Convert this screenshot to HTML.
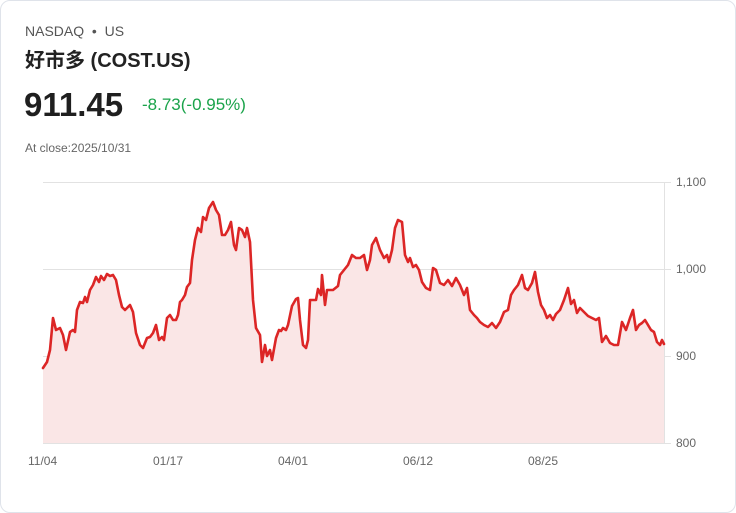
<!DOCTYPE html>
<html><head><meta charset="utf-8"><style>
body{margin:0;background:#fff;width:736px;height:513px;overflow:hidden;font-family:"Liberation Sans","Noto Sans CJK SC",sans-serif}
.card{position:absolute;left:0;top:0;width:734px;height:511px;border:1px solid #dfe3ea;border-radius:10px}
.t{position:absolute;white-space:nowrap}
</style></head><body>
<div class="card"></div>
<div class="t" style="left:25px;top:23px;font-size:14px;color:#555">NASDAQ&nbsp; • &nbsp;US</div>
<div class="t" style="left:25px;top:44px;font-size:20px;font-weight:bold;color:#222">好市多 (COST.US)</div>
<div class="t" style="left:24px;top:86px;font-size:33px;font-weight:bold;color:#1f1f1f">911.45</div>
<div class="t" style="left:142px;top:95px;font-size:17px;color:#1aa34a">-8.73(-0.95%)</div>
<div class="t" style="left:25px;top:141px;font-size:12px;color:#666">At close:2025/10/31</div>
<svg width="736" height="513" style="position:absolute;left:0;top:0">
<g stroke="#e2e2e2" stroke-width="1">
<line x1="43" y1="182.5" x2="671" y2="182.5"/><line x1="43" y1="269.5" x2="671" y2="269.5"/>
<line x1="43" y1="356.5" x2="671" y2="356.5"/><line x1="43" y1="443.5" x2="671" y2="443.5"/>
<line x1="664.5" y1="182" x2="664.5" y2="443"/></g>
<polygon fill="#fae6e6" points="43,443 43,368 47,362 50,350 53,318 56,330 60,328 63,335 66,350 70,332 73,330 75,332 77,310 80,302 83,303 85,297 87,302 90,290 93,285 96,277 99,282 101,276 104,280 107,274 110,276 113,275 116,280 119,295 122,307 125,310 127,308 130,305 133,312 136,333 140,345 143,348 147,338 150,337 153,333 156,325 159,340 162,337 164,340 167,318 170,315 173,320 176,320 178,315 180,302 182,300 185,295 187,287 190,283 192,260 195,240 198,228 201,232 203,217 206,220 209,208 213,202 216,210 219,215 222,235 225,235 228,230 231,222 234,245 236,250 239,228 242,230 245,237 247,228 250,242 253,300 256,328 260,335 262,362 265,345 267,356 270,350 272,360 276,338 279,330 281,331 283,328 286,330 288,325 292,306 296,299 298,298 300,320 303,345 306,348 308,340 310,300 313,300 316,300 318,289 321,295 322,275 325,305 327,290 330,290 333,290 338,286 340,275 344,270 348,265 352,255 356,258 360,258 364,255 367,270 370,260 372,245 376,238 380,250 384,258 387,255 389,262 392,250 395,228 398,220 402,222 405,255 408,262 410,258 413,267 416,265 419,270 422,282 426,288 430,290 433,268 436,270 440,283 444,285 448,280 452,286 456,278 460,285 464,295 467,288 470,310 474,315 477,318 480,322 484,325 488,327 492,323 496,328 500,322 504,312 508,310 511,295 514,290 518,285 522,275 525,288 528,290 532,283 535,272 538,292 541,305 544,310 547,318 550,315 553,320 556,314 560,310 564,300 568,288 571,304 574,300 577,313 580,308 584,312 588,316 592,318 596,320 599,318 602,342 606,336 610,343 614,345 618,345 622,322 626,330 630,318 633,310 636,330 639,325 642,323 645,320 648,325 651,330 654,332 657,342 660,345 662,340 664,344 664,443"/>
<polyline fill="none" stroke="#dc2626" stroke-width="2.6" stroke-linejoin="round" stroke-linecap="round" points="43,368 47,362 50,350 53,318 56,330 60,328 63,335 66,350 70,332 73,330 75,332 77,310 80,302 83,303 85,297 87,302 90,290 93,285 96,277 99,282 101,276 104,280 107,274 110,276 113,275 116,280 119,295 122,307 125,310 127,308 130,305 133,312 136,333 140,345 143,348 147,338 150,337 153,333 156,325 159,340 162,337 164,340 167,318 170,315 173,320 176,320 178,315 180,302 182,300 185,295 187,287 190,283 192,260 195,240 198,228 201,232 203,217 206,220 209,208 213,202 216,210 219,215 222,235 225,235 228,230 231,222 234,245 236,250 239,228 242,230 245,237 247,228 250,242 253,300 256,328 260,335 262,362 265,345 267,356 270,350 272,360 276,338 279,330 281,331 283,328 286,330 288,325 292,306 296,299 298,298 300,320 303,345 306,348 308,340 310,300 313,300 316,300 318,289 321,295 322,275 325,305 327,290 330,290 333,290 338,286 340,275 344,270 348,265 352,255 356,258 360,258 364,255 367,270 370,260 372,245 376,238 380,250 384,258 387,255 389,262 392,250 395,228 398,220 402,222 405,255 408,262 410,258 413,267 416,265 419,270 422,282 426,288 430,290 433,268 436,270 440,283 444,285 448,280 452,286 456,278 460,285 464,295 467,288 470,310 474,315 477,318 480,322 484,325 488,327 492,323 496,328 500,322 504,312 508,310 511,295 514,290 518,285 522,275 525,288 528,290 532,283 535,272 538,292 541,305 544,310 547,318 550,315 553,320 556,314 560,310 564,300 568,288 571,304 574,300 577,313 580,308 584,312 588,316 592,318 596,320 599,318 602,342 606,336 610,343 614,345 618,345 622,322 626,330 630,318 633,310 636,330 639,325 642,323 645,320 648,325 651,330 654,332 657,342 660,345 662,340 664,344"/>
<g font-family="Liberation Sans,sans-serif" font-size="12" fill="#666">
<text x="676" y="186">1,100</text><text x="676" y="273">1,000</text><text x="676" y="360">900</text><text x="676" y="447">800</text>
<text x="28" y="465">11/04</text><text x="153" y="465">01/17</text><text x="278" y="465">04/01</text><text x="403" y="465">06/12</text><text x="528" y="465">08/25</text>
</g></svg>
</body></html>
